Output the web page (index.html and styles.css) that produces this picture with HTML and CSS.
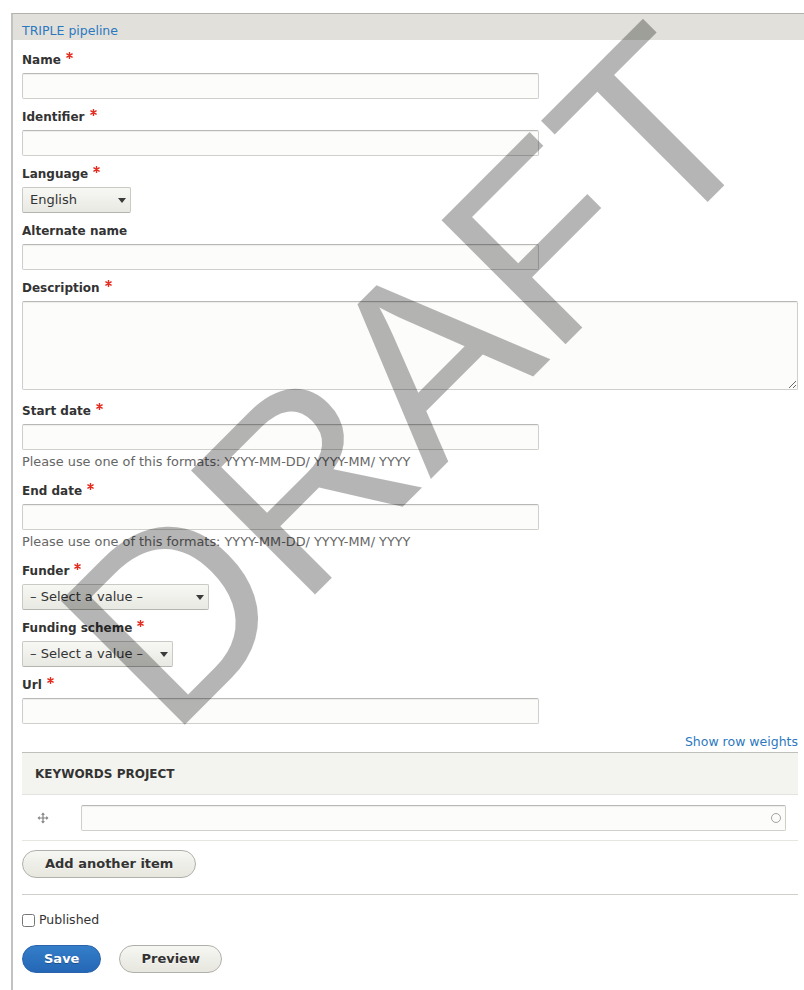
FILE: index.html
```html
<!DOCTYPE html>
<html lang="en">
<head>
<meta charset="utf-8">
<title>Create Project</title>
<link rel="stylesheet" href="styles.css">
</head>
<body>
<div class="page">
  <form class="node-form">
    <section class="fieldset">
      <div class="fieldset-legend"><a href="#" class="fieldset-title">TRIPLE pipeline</a></div>
      <div class="fieldset-body">

        <div class="form-item">
          <label class="form-label">Name<svg class="req" viewBox="0 0 8 8"><path d="M4 0.5v7M1 2.2l6 3.6M7 2.2l-6 3.6"/></svg></label>
          <input class="form-text" type="text">
        </div>

        <div class="form-item">
          <label class="form-label">Identifier<svg class="req" viewBox="0 0 8 8"><path d="M4 0.5v7M1 2.2l6 3.6M7 2.2l-6 3.6"/></svg></label>
          <input class="form-text" type="text">
        </div>

        <div class="form-item">
          <label class="form-label">Language<svg class="req" viewBox="0 0 8 8"><path d="M4 0.5v7M1 2.2l6 3.6M7 2.2l-6 3.6"/></svg></label>
          <span class="select-wrap select-lang"><select class="form-select"><option>English</option></select></span>
        </div>

        <div class="form-item">
          <label class="form-label">Alternate name</label>
          <input class="form-text" type="text">
        </div>

        <div class="form-item form-item--textarea">
          <label class="form-label">Description<svg class="req" viewBox="0 0 8 8"><path d="M4 0.5v7M1 2.2l6 3.6M7 2.2l-6 3.6"/></svg></label>
          <textarea class="form-textarea"></textarea>
        </div>

        <div class="form-item">
          <label class="form-label">Start date<svg class="req" viewBox="0 0 8 8"><path d="M4 0.5v7M1 2.2l6 3.6M7 2.2l-6 3.6"/></svg></label>
          <input class="form-text" type="text">
          <div class="description">Please use one of this formats: YYYY-MM-DD/ YYYY-MM/ YYYY</div>
        </div>

        <div class="form-item">
          <label class="form-label">End date<svg class="req" viewBox="0 0 8 8"><path d="M4 0.5v7M1 2.2l6 3.6M7 2.2l-6 3.6"/></svg></label>
          <input class="form-text" type="text">
          <div class="description">Please use one of this formats: YYYY-MM-DD/ YYYY-MM/ YYYY</div>
        </div>

        <div class="form-item">
          <label class="form-label">Funder<svg class="req" viewBox="0 0 8 8"><path d="M4 0.5v7M1 2.2l6 3.6M7 2.2l-6 3.6"/></svg></label>
          <span class="select-wrap select-funder"><select class="form-select"><option>– Select a value –</option></select></span>
        </div>

        <div class="form-item">
          <label class="form-label">Funding scheme<svg class="req" viewBox="0 0 8 8"><path d="M4 0.5v7M1 2.2l6 3.6M7 2.2l-6 3.6"/></svg></label>
          <span class="select-wrap select-scheme"><select class="form-select"><option>– Select a value –</option></select></span>
        </div>

        <div class="form-item">
          <label class="form-label">Url<svg class="req" viewBox="0 0 8 8"><path d="M4 0.5v7M1 2.2l6 3.6M7 2.2l-6 3.6"/></svg></label>
          <input class="form-text" type="text">
        </div>

        <div class="tabledrag-toggle"><a href="#" class="link">Show row weights</a></div>

        <table class="field-multiple-table">
          <thead>
            <tr><th colspan="2">Keywords project</th></tr>
          </thead>
          <tbody>
            <tr>
              <td class="cell-handle">
                <svg class="handle" viewBox="0 0 12 12"><path d="M6 0.5l2 2.2H4zM6 11.5l2-2.2H4zM0.5 6l2.2-2v4zM11.5 6l-2.2-2v4z" class="arrow"/><path d="M6 2v8M2 6h8" class="bar"/></svg>
              </td>
              <td class="cell-input">
                <span class="autocomplete"><input class="form-text form-autocomplete" type="text"><span class="throbber"></span></span>
              </td>
            </tr>
          </tbody>
        </table>

        <button type="button" class="button button-add">Add another item</button>

        <hr class="rule">

        <label class="check"><input type="checkbox" class="form-checkbox"> Published</label>

        <div class="form-actions">
          <button type="button" class="button button--primary">Save</button>
          <button type="button" class="button">Preview</button>
        </div>
      </div>
    </section>
  </form>

  <div class="stamp" aria-hidden="true"><span class="stamp-text">DRAFT</span></div>
</div>
</body>
</html>
```

FILE: styles.css
```css
html, body {
  margin: 0;
  padding: 0;
  background: #fff;
}

body {
  font-family: "DejaVu Sans", Verdana, sans-serif;
  font-size: 13px;
  color: #333;
}

.page {
  position: relative;
  min-height: 990px;
  overflow: hidden;
}

.node-form {
  margin: 0;
}

/* Fieldset with a grey legend bar */
.fieldset {
  margin: 13px 0 0 11px;
  border-top: 1px solid #b1b1ae;
  border-left: 2px solid #c2c2c0;
}

.fieldset-legend {
  background: #e1e0da;
  padding: 8px 9px 0;
  line-height: 18px;
  height: 18px;
}

.fieldset-title {
  color: #2c78c0;
  text-decoration: none;
  font-size: 12.5px;
}

.fieldset-body {
  padding: 11px 6px 40px 9px;
}

/* Form items */
.form-item {
  margin-bottom: 9px;
}

.form-item--textarea {
  margin-bottom: 12px;
}

.form-label {
  display: block;
  font-weight: bold;
  font-size: 12px;
  line-height: 18px;
  margin-bottom: 4px;
  color: #333;
}

.req {
  width: 7px;
  height: 7px;
  margin-left: 5px;
  vertical-align: 5px;
  fill: none;
  stroke: #e52a1e;
  stroke-width: 1.6;
  stroke-linecap: round;
}

.form-text {
  display: block;
  box-sizing: border-box;
  width: 517px;
  height: 26px;
  margin: 0;
  padding: 4px 6px;
  border: 1px solid #cfcfcc;
  border-top-color: #b8b8b5;
  border-radius: 2px;
  background: #fcfcfa;
  box-shadow: inset 0 1px 1px rgba(0, 0, 0, 0.06);
  font: 13px "DejaVu Sans", sans-serif;
  color: #333;
  outline: none;
}

.form-textarea {
  display: block;
  box-sizing: border-box;
  width: 100%;
  height: 89px;
  margin: 0;
  padding: 4px 6px;
  border: 1px solid #cfcfcc;
  border-top-color: #b8b8b5;
  border-radius: 2px;
  background: #fcfcfa;
  box-shadow: inset 0 1px 1px rgba(0, 0, 0, 0.06);
  font: 13px "DejaVu Sans", sans-serif;
  resize: both;
}

.description {
  margin: 4px 0 0;
  padding-bottom: 3px;
  font-size: 12.85px;
  line-height: 16px;
  color: #666;
}

/* Selects with a drawn arrow */
.select-wrap {
  position: relative;
  display: inline-block;
  vertical-align: top;
}

.select-wrap::after {
  content: "";
  position: absolute;
  top: 11px;
  right: 5px;
  border-left: 4px solid transparent;
  border-right: 4px solid transparent;
  border-top: 5px solid #3a3a3a;
  pointer-events: none;
}

.form-select {
  display: block;
  box-sizing: border-box;
  height: 26px;
  margin: 0;
  padding: 0 20px 0 7px;
  -webkit-appearance: none;
  appearance: none;
  border: 1px solid #c9c9c5;
  border-bottom-color: #b3b3af;
  border-radius: 2px;
  background: linear-gradient(to bottom, #f7f7f4, #e9e9e3);
  font: 13px "DejaVu Sans", sans-serif;
  color: #333;
  line-height: 24px;
}

.select-lang .form-select { width: 109px; }
.select-funder .form-select { width: 187px; }
.select-scheme .form-select { width: 151px; }

/* Table drag */
.tabledrag-toggle {
  margin-top: 2px;
  text-align: right;
  line-height: 18px;
  margin-bottom: 1px;
}

.link {
  color: #2c78c0;
  text-decoration: none;
  font-size: 12.5px;
}

.field-multiple-table {
  width: 100%;
  border-collapse: collapse;
  border-spacing: 0;
}

.field-multiple-table th {
  padding: 12px 13px 11px;
  text-align: left;
  font-size: 12px;
  font-weight: bold;
  line-height: 18px;
  text-transform: uppercase;
  color: #333;
  background: #f3f3ef;
  border-top: 1px solid #c0c0bb;
  border-bottom: 1px solid #e4e3de;
}

.field-multiple-table td {
  padding: 10px 12px 9px;
  border-bottom: 1px solid #e6e5e0;
  vertical-align: middle;
}

.cell-input {
  width: 100%;
}

.handle {
  display: block;
  width: 12px;
  height: 12px;
  margin: 0 8px 0 3px;
}

.handle .arrow {
  fill: #808080;
}

.handle .bar {
  stroke: #808080;
  stroke-width: 1.2;
}

.autocomplete {
  position: relative;
  display: block;
}

.form-autocomplete {
  width: 100%;
}

.throbber {
  position: absolute;
  right: 5px;
  top: 8px;
  box-sizing: border-box;
  width: 10px;
  height: 10px;
  border: 1.5px solid #a3a3a3;
  border-radius: 50%;
}

/* Buttons */
.button {
  display: inline-block;
  box-sizing: border-box;
  height: 28px;
  padding: 0 21px;
  border: 1px solid #b0b0ab;
  border-radius: 20em;
  background: linear-gradient(to bottom, #f6f6f3, #e7e7df);
  font: bold 13px "DejaVu Sans", sans-serif;
  line-height: 26px;
  color: #333;
  text-shadow: 0 1px rgba(255, 255, 255, 0.6);
  cursor: pointer;
}

.button-add {
  display: block;
  margin-top: 9px;
  padding: 0 22px;
}

.button--primary {
  background: linear-gradient(to bottom, #347ec8, #2467b6);
  border-color: #2a65ac;
  color: #fff;
  text-shadow: 0 1px rgba(0, 0, 0, 0.3);
}

.rule {
  margin: 16px 0 0;
  border: 0;
  border-top: 1px solid #cfcfcc;
  height: 0;
}

.check {
  display: flex;
  align-items: center;
  margin-top: 16px;
  line-height: 18px;
  font-size: 12.5px;
  color: #333;
  gap: 4px;
}

.form-checkbox {
  margin: 0;
  width: 13px;
  height: 13px;
}

.form-actions {
  display: flex;
  gap: 18px;
  margin-top: 16px;
}

/* Watermark stamp over the form; a tight line box keeps its rotated frame inside the page */
.stamp {
  position: absolute;
  inset: 0;
  overflow: hidden;
  pointer-events: none;
}

.stamp-text {
  position: absolute;
  left: -17px;
  top: 281px;
  width: 850px;
  height: 191px;
  font-family: "Liberation Sans", Arial, sans-serif;
  font-size: 255px;
  line-height: 191px;
  text-align: center;
  white-space: nowrap;
  color: rgba(0, 0, 0, 0.29);
  transform: rotate(-45deg);
}
```
